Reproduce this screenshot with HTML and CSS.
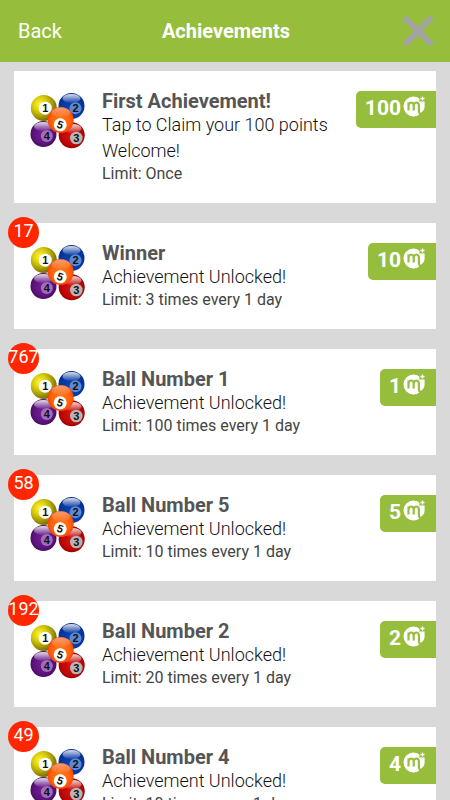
FILE: index.html
```
<!DOCTYPE html>
<html lang="en">
<head>
  <meta charset="UTF-8">
  <meta name="viewport" content="width=device-width, initial-scale=1.0">
  <title>Achievements</title>
  <link rel="stylesheet" href="styles.css">
</head>
<body>
  <!-- Shared icons -->
  <svg class="sprite" aria-hidden="true">
    <defs>
      <radialGradient id="yellow" cx="0.35" cy="0.35" r="0.7">
        <stop offset="0" stop-color="#fff53a"/>
        <stop offset="0.4" stop-color="#d8cb0a"/>
        <stop offset="1" stop-color="#6f6500"/>
      </radialGradient>
      <radialGradient id="blue" cx="0.5" cy="0.6" r="0.6">
        <stop offset="0" stop-color="#0a44b4"/>
        <stop offset="0.7" stop-color="#0536a0"/>
        <stop offset="1" stop-color="#042a80"/>
      </radialGradient>
      <radialGradient id="orange" cx="0.5" cy="0.5" r="0.55">
        <stop offset="0" stop-color="#ff7a1c"/>
        <stop offset="0.7" stop-color="#ff5f08"/>
        <stop offset="1" stop-color="#f03c00"/>
      </radialGradient>
      <radialGradient id="purple" cx="0.5" cy="0.5" r="0.55">
        <stop offset="0" stop-color="#76209a"/>
        <stop offset="0.7" stop-color="#5d137c"/>
        <stop offset="1" stop-color="#3f0a58"/>
      </radialGradient>
      <radialGradient id="red" cx="0.5" cy="0.5" r="0.55">
        <stop offset="0" stop-color="#d61414"/>
        <stop offset="0.7" stop-color="#bd0707"/>
        <stop offset="1" stop-color="#8b0000"/>
      </radialGradient>
      <linearGradient id="shine" x1="0" y1="0" x2="0" y2="1">
        <stop offset="0" stop-color="#fff" stop-opacity="0.85"/>
        <stop offset="1" stop-color="#fff" stop-opacity="0.05"/>
      </linearGradient>
    </defs>
    <symbol id="balls" viewBox="0 0 56 56">
      <g font-family="Liberation Sans, Arial, sans-serif" font-weight="bold" font-size="11" text-anchor="middle" fill="#111">
        <circle cx="13.8" cy="15" r="13" fill="url(#yellow)"/>
        <circle cx="15.2" cy="15.2" r="6.5" fill="#fff"/>
        <text x="15.2" y="19">1</text>
        <circle cx="41.5" cy="13" r="13" fill="url(#blue)"/>
        <ellipse cx="41.5" cy="5.5" rx="9" ry="4.5" fill="url(#shine)"/>
        <circle cx="45.5" cy="15.2" r="6" fill="#5f88d0"/>
        <text x="45.5" y="19.2">2</text>
        <circle cx="13.5" cy="41" r="13" fill="url(#purple)"/>
        <ellipse cx="13.5" cy="33.5" rx="9.5" ry="4.5" fill="url(#shine)"/>
        <circle cx="16.8" cy="43" r="6" fill="#a06cbe"/>
        <text x="16.8" y="47">4</text>
        <circle cx="41.7" cy="42.3" r="13" fill="url(#red)"/>
        <ellipse cx="42" cy="35.5" rx="9.5" ry="4.5" fill="url(#shine)"/>
        <circle cx="46.3" cy="45" r="6.3" fill="#b9b4b4"/>
        <text x="46.3" y="49">3</text>
        <circle cx="30.7" cy="27" r="13" fill="url(#orange)"/>
        <ellipse cx="31" cy="19.5" rx="9.5" ry="5" fill="url(#shine)" opacity="0.5"/>
        <circle cx="30.2" cy="31.8" r="6.5" fill="#fff"/>
        <text x="30.2" y="35.6" transform="rotate(20 30.2 31.8)">5</text>
      </g>
    </symbol>
    <symbol id="coin" viewBox="0 0 22 22">
      <circle cx="10.5" cy="10.5" r="10" fill="#fff"/>
      <path d="M5.5 14.5V6.5M5.5 9.5Q6 6.5 8.2 6.5T10.7 9.5V14.5M10.7 9.5Q11.2 6.5 13.4 6.5T15.9 9.5V15Q16 18 19 18.5" fill="none" stroke="#96be3c" stroke-width="2.2"/>
      <path d="M16.5 0H22V6H16.5Z" fill="#96be3c"/>
      <path d="M17.2 5.5H21.6V10.5Q21.4 15 17.9 16.4Q17.2 15.5 17.2 14Z" fill="#fff"/>
      <path d="M19.5 0.5V4.5M17.5 2.5H21.5" fill="none" stroke="#fff" stroke-width="1.3"/>
    </symbol>
  </svg>

  <header class="top-bar">
    <button class="back-button">Back</button>
    <h1>Achievements</h1>
    <button class="close-button" aria-label="Close">
      <svg viewBox="0 0 32 32"><path d="M2.5 2.5L29.5 29.5M29.5 2.5L2.5 29.5" fill="none" stroke="#a3a3a3" stroke-width="6"/></svg>
    </button>
  </header>

  <main class="list">
    <article class="card">
      <svg class="balls"><use href="#balls"/></svg>
      <div class="info">
        <h2>First Achievement!</h2>
        <p class="description">Tap to Claim your 100 points<br>Welcome!</p>
        <p class="limit">Limit: Once</p>
      </div>
      <div class="points">100<svg><use href="#coin"/></svg></div>
    </article>

    <article class="card">
      <span class="badge">17</span>
      <svg class="balls"><use href="#balls"/></svg>
      <div class="info">
        <h2>Winner</h2>
        <p class="description">Achievement Unlocked!</p>
        <p class="limit">Limit: 3 times every 1 day</p>
      </div>
      <div class="points">10<svg><use href="#coin"/></svg></div>
    </article>

    <article class="card">
      <span class="badge">767</span>
      <svg class="balls"><use href="#balls"/></svg>
      <div class="info">
        <h2>Ball Number 1</h2>
        <p class="description">Achievement Unlocked!</p>
        <p class="limit">Limit: 100 times every 1 day</p>
      </div>
      <div class="points">1<svg><use href="#coin"/></svg></div>
    </article>

    <article class="card">
      <span class="badge">58</span>
      <svg class="balls"><use href="#balls"/></svg>
      <div class="info">
        <h2>Ball Number 5</h2>
        <p class="description">Achievement Unlocked!</p>
        <p class="limit">Limit: 10 times every 1 day</p>
      </div>
      <div class="points">5<svg><use href="#coin"/></svg></div>
    </article>

    <article class="card">
      <span class="badge">192</span>
      <svg class="balls"><use href="#balls"/></svg>
      <div class="info">
        <h2>Ball Number 2</h2>
        <p class="description">Achievement Unlocked!</p>
        <p class="limit">Limit: 20 times every 1 day</p>
      </div>
      <div class="points">2<svg><use href="#coin"/></svg></div>
    </article>

    <article class="card">
      <span class="badge">49</span>
      <svg class="balls"><use href="#balls"/></svg>
      <div class="info">
        <h2>Ball Number 4</h2>
        <p class="description">Achievement Unlocked!</p>
        <p class="limit">Limit: 10 times every 1 day</p>
      </div>
      <div class="points">4<svg><use href="#coin"/></svg></div>
    </article>
  </main>
</body>
</html>
```
FILE: styles.css
```
html, body {
  margin: 0;
  padding: 0;
  height: 100%;
}
body {
  display: flex;
  flex-direction: column;
  overflow: hidden;
  font-family: Roboto, Arial, sans-serif;
  color: #444;
  background: #d9d9d9;
}
h1, h2, p {
  margin: 0;
}
button {
  padding: 0;
  border: none;
  background: none;
  font: inherit;
  cursor: pointer;
}
.sprite {
  position: absolute;
  width: 0;
  height: 0;
}
.top-bar {
  display: grid;
  grid-template-columns: 1fr auto 1fr;
  align-items: center;
  flex-shrink: 0;
  height: 62px;
  padding: 0 16px 0 18px;
  background: #96be3c;
  color: white;
}
.top-bar h1 {
  font-size: 20px;
  font-weight: bold;
}
.back-button {
  justify-self: start;
  color: white;
  font-size: 20px;
}
.close-button {
  justify-self: end;
}
.close-button svg {
  display: block;
  width: 32px;
  height: 32px;
}
.list {
  display: flex;
  flex-direction: column;
  flex: 1;
  gap: 20px;
  min-height: 0;
  padding: 9px 14px 20px;
  overflow-y: auto;
  scrollbar-width: none;
}
.card {
  display: flex;
  flex-shrink: 0;
  align-items: flex-start;
  position: relative;
  padding: 20px 0 19px 16px;
  background: white;
}
.balls {
  flex-shrink: 0;
  width: 56px;
  height: 56px;
  margin: 2px 16px 0 0;
}
.info {
  flex: 1;
}
.info h2 {
  font-size: 20px;
  line-height: 21px;
  color: #555;
}
.description {
  color: #111;
  font-size: 18px;
  font-weight: 300;
  line-height: 26px;
}
.limit {
  font-size: 16px;
  line-height: 20px;
}
.points {
  display: flex;
  gap: 2px;
  padding: 5px 11px 8px 9px;
  border-radius: 5px 0 0 5px;
  background: #96be3c;
  color: white;
  font-size: 21px;
  font-weight: bold;
  line-height: 24px;
}
.points svg {
  width: 22px;
  height: 22px;
}
.badge {
  display: flex;
  justify-content: center;
  position: absolute;
  top: -6px;
  left: -6px;
  width: 31px;
  height: 31px;
  border-radius: 50%;
  background: #ff2600;
  color: white;
  font-size: 18px;
  line-height: 28px;
}
```
